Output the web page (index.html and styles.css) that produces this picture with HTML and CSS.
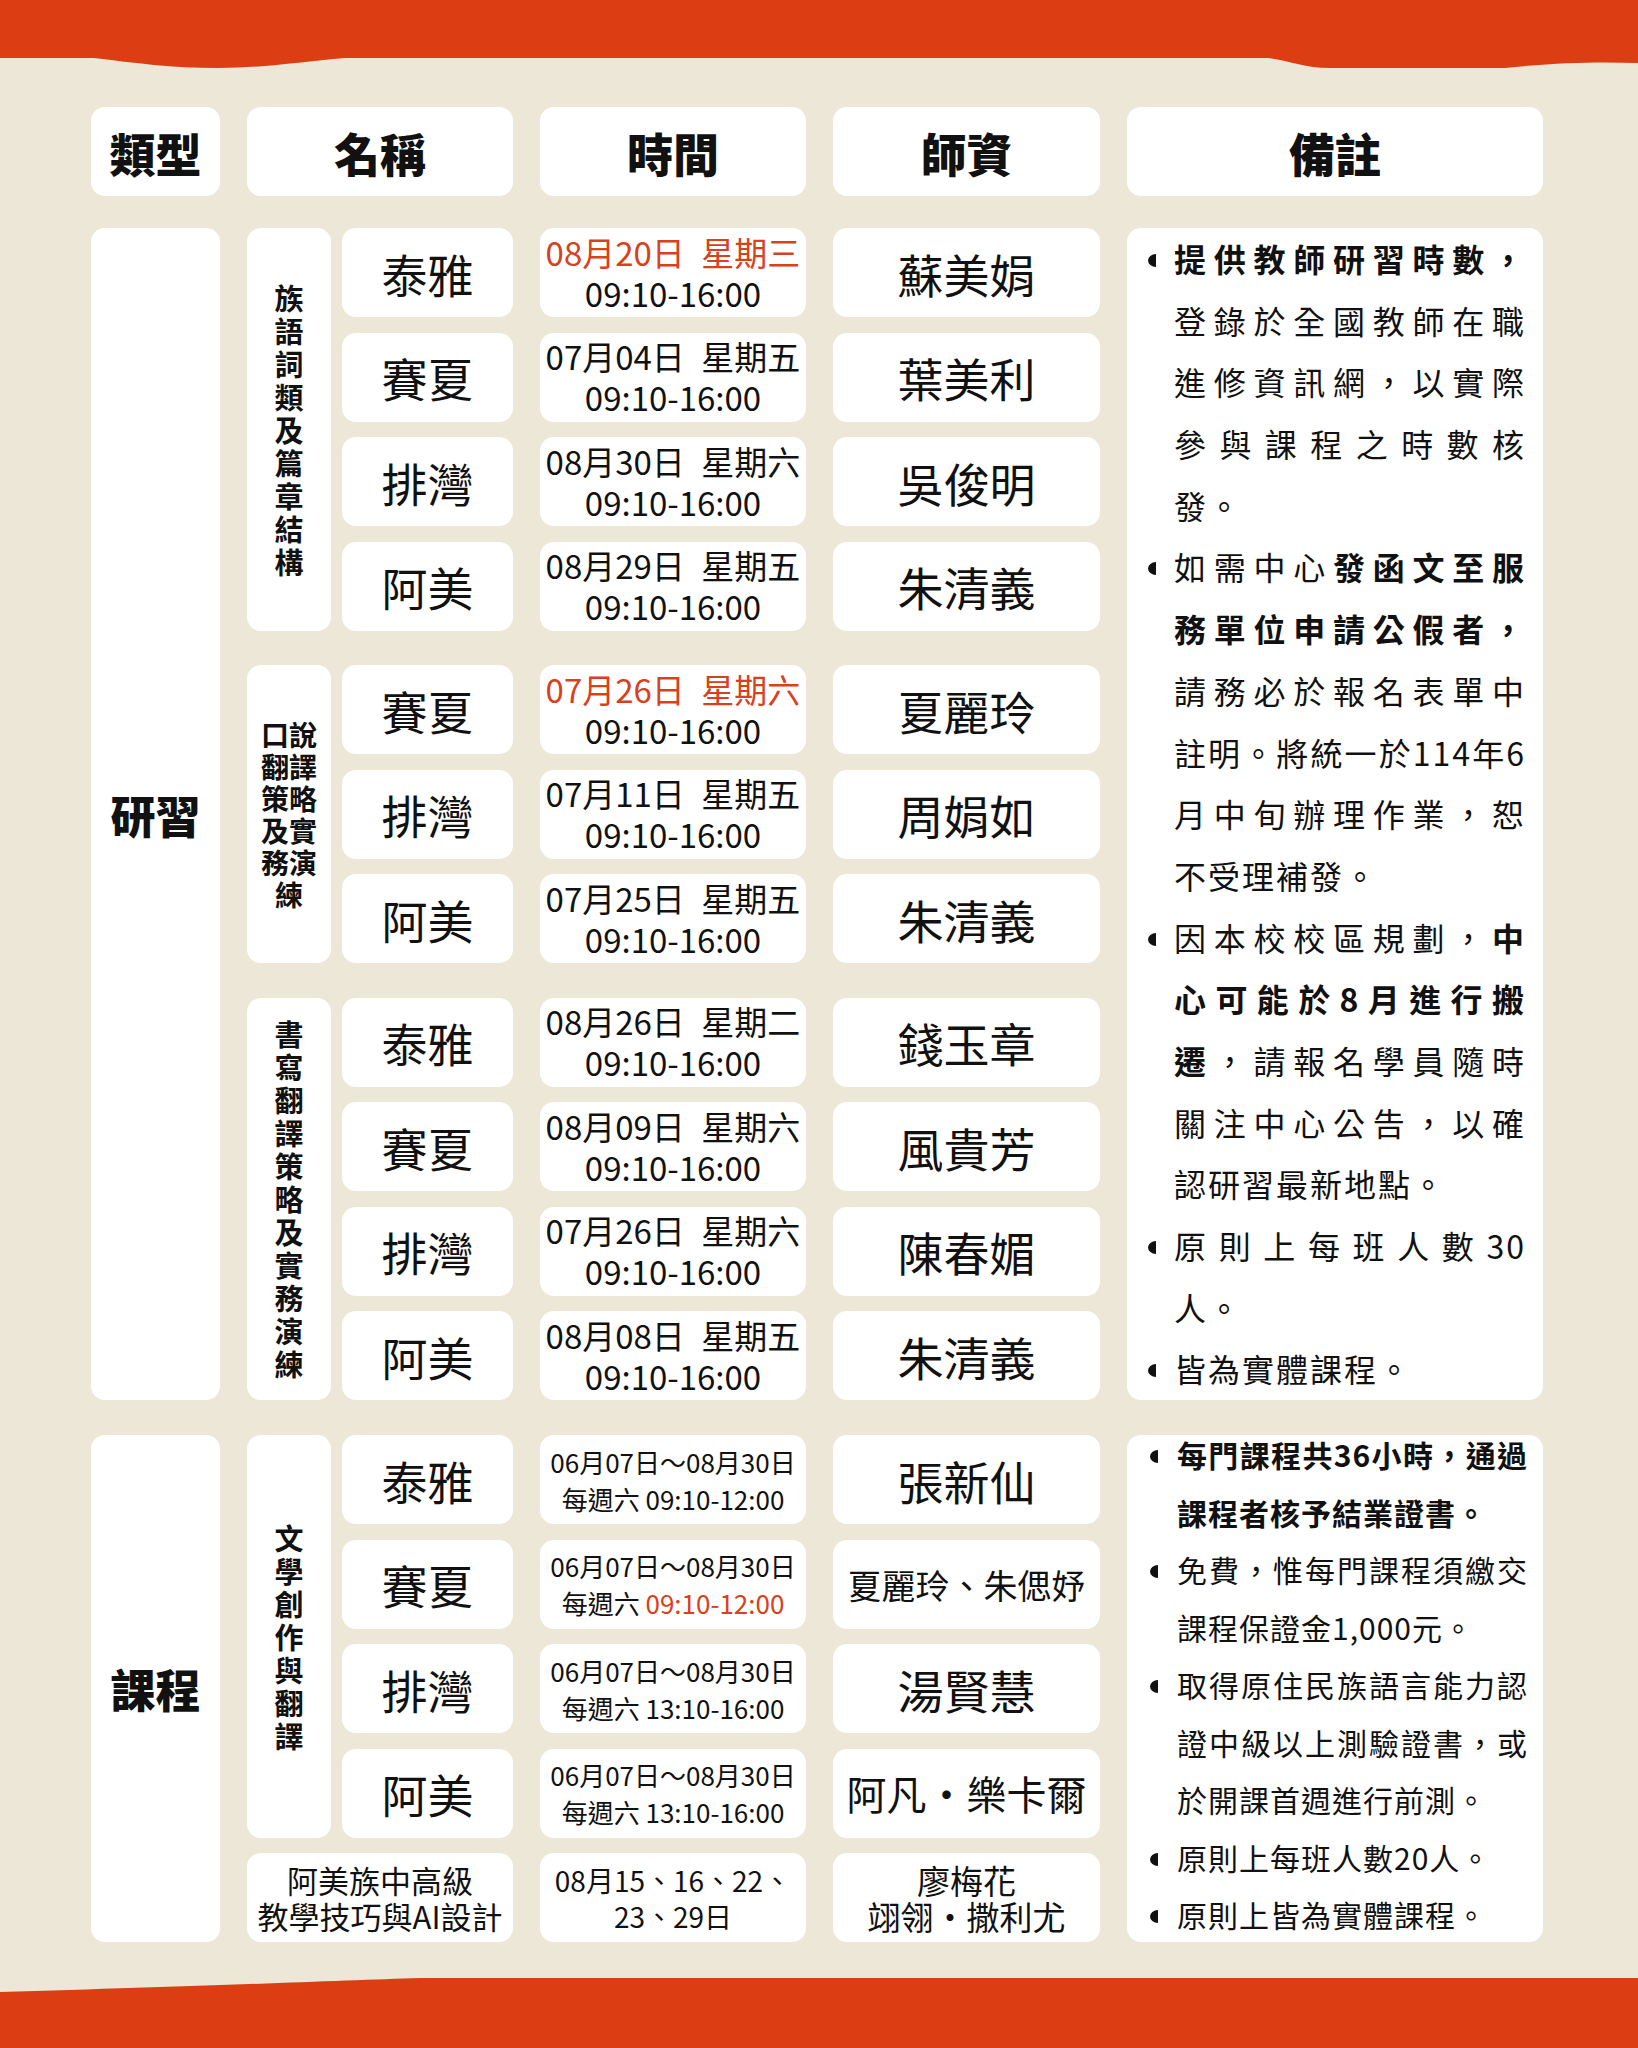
FILE: index.html
```html
<!DOCTYPE html>
<html lang="zh-Hant">
<head>
<meta charset="utf-8">
<title>課程表</title>
<link rel="stylesheet" href="styles.css">
</head>
<body>
<svg class="wave" viewBox="0 0 1638 70" preserveAspectRatio="none" aria-hidden="true">
  <path fill="#DC3D12" d="M0 0 H1638 V63 C1600 62 1560 62 1505 68 H1330 C1305 68 1290 61 1268 58 H345 C300 62 262 68 218 68 C172 68 135 63 94 58 H0 Z"/>
</svg>
<main class="sheet">
  <div class="head-row">
    <div class="cell head w-type">類型</div>
    <div class="cell head w-name">名稱</div>
    <div class="cell head w-time">時間</div>
    <div class="cell head w-teacher">師資</div>
    <div class="cell head w-note">備註</div>
  </div>

  <section class="block">
    <div class="cell type">研習</div>
    <div class="groups">
      <div class="group">
        <div class="cell sub"><span class="vt">族語詞類及篇章結構</span></div>
        <div class="rows">
          <div class="row">
            <div class="cell name">泰雅</div>
            <div class="cell time"><span class="red">08月20日&ensp;星期三</span><span>09:10-16:00</span></div>
            <div class="cell teacher">蘇美娟</div>
          </div>
          <div class="row">
            <div class="cell name">賽夏</div>
            <div class="cell time"><span>07月04日&ensp;星期五</span><span>09:10-16:00</span></div>
            <div class="cell teacher">葉美利</div>
          </div>
          <div class="row">
            <div class="cell name">排灣</div>
            <div class="cell time"><span>08月30日&ensp;星期六</span><span>09:10-16:00</span></div>
            <div class="cell teacher">吳俊明</div>
          </div>
          <div class="row">
            <div class="cell name">阿美</div>
            <div class="cell time"><span>08月29日&ensp;星期五</span><span>09:10-16:00</span></div>
            <div class="cell teacher">朱清義</div>
          </div>
        </div>
      </div>

      <div class="group">
        <div class="cell sub"><span class="vt vt2">口說翻譯策略及實務演練</span></div>
        <div class="rows">
          <div class="row">
            <div class="cell name">賽夏</div>
            <div class="cell time"><span class="red">07月26日&ensp;星期六</span><span>09:10-16:00</span></div>
            <div class="cell teacher">夏麗玲</div>
          </div>
          <div class="row">
            <div class="cell name">排灣</div>
            <div class="cell time"><span>07月11日&ensp;星期五</span><span>09:10-16:00</span></div>
            <div class="cell teacher">周娟如</div>
          </div>
          <div class="row">
            <div class="cell name">阿美</div>
            <div class="cell time"><span>07月25日&ensp;星期五</span><span>09:10-16:00</span></div>
            <div class="cell teacher">朱清義</div>
          </div>
        </div>
      </div>

      <div class="group">
        <div class="cell sub"><span class="vt">書寫翻譯策略及實務演練</span></div>
        <div class="rows">
          <div class="row">
            <div class="cell name">泰雅</div>
            <div class="cell time"><span>08月26日&ensp;星期二</span><span>09:10-16:00</span></div>
            <div class="cell teacher">錢玉章</div>
          </div>
          <div class="row">
            <div class="cell name">賽夏</div>
            <div class="cell time"><span>08月09日&ensp;星期六</span><span>09:10-16:00</span></div>
            <div class="cell teacher">風貴芳</div>
          </div>
          <div class="row">
            <div class="cell name">排灣</div>
            <div class="cell time"><span>07月26日&ensp;星期六</span><span>09:10-16:00</span></div>
            <div class="cell teacher">陳春媚</div>
          </div>
          <div class="row">
            <div class="cell name">阿美</div>
            <div class="cell time"><span>08月08日&ensp;星期五</span><span>09:10-16:00</span></div>
            <div class="cell teacher">朱清義</div>
          </div>
        </div>
      </div>
    </div>
    <div class="cell notes notes-a">
      <ul>
        <li><i class="dot"></i><p class="txt">
          <span class="ln"><b>提供教師研習時數，</b></span>
          <span class="ln">登錄於全國教師在職</span>
          <span class="ln">進修資訊網，以實際</span>
          <span class="ln">參與課程之時數核</span>
          <span class="ln end">發。</span>
        </p></li>
        <li><i class="dot"></i><p class="txt">
          <span class="ln">如需中心<b>發函文至服</b></span>
          <span class="ln"><b>務單位申請公假者，</b></span>
          <span class="ln">請務必於報名表單中</span>
          <span class="ln">註明。將統一於114年6</span>
          <span class="ln">月中旬辦理作業，恕</span>
          <span class="ln end">不受理補發。</span>
        </p></li>
        <li><i class="dot"></i><p class="txt">
          <span class="ln">因本校校區規劃，<b>中</b></span>
          <span class="ln"><b>心可能於8月進行搬</b></span>
          <span class="ln"><b>遷</b>，請報名學員隨時</span>
          <span class="ln">關注中心公告，以確</span>
          <span class="ln end">認研習最新地點。</span>
        </p></li>
        <li><i class="dot"></i><p class="txt">
          <span class="ln">原則上每班人數30</span>
          <span class="ln end">人。</span>
        </p></li>
        <li><i class="dot"></i><p class="txt">
          <span class="ln end">皆為實體課程。</span>
        </p></li>
      </ul>
    </div>
  </section>

  <section class="block">
    <div class="cell type">課程</div>
    <div class="groups course">
      <div class="group">
        <div class="cell sub"><span class="vt">文學創作與翻譯</span></div>
        <div class="rows">
          <div class="row">
            <div class="cell name">泰雅</div>
            <div class="cell time ctime"><span>06月07日～08月30日</span><span>每週六 09:10-12:00</span></div>
            <div class="cell teacher">張新仙</div>
          </div>
          <div class="row">
            <div class="cell name">賽夏</div>
            <div class="cell time ctime"><span>06月07日～08月30日</span><span>每週六 <span class="red">09:10-12:00</span></span></div>
            <div class="cell teacher t-sm">夏麗玲、朱偲妤</div>
          </div>
          <div class="row">
            <div class="cell name">排灣</div>
            <div class="cell time ctime"><span>06月07日～08月30日</span><span>每週六 13:10-16:00</span></div>
            <div class="cell teacher">湯賢慧</div>
          </div>
          <div class="row">
            <div class="cell name">阿美</div>
            <div class="cell time ctime"><span>06月07日～08月30日</span><span>每週六 13:10-16:00</span></div>
            <div class="cell teacher t-md">阿凡・樂卡爾</div>
          </div>
        </div>
      </div>
      <div class="row">
        <div class="cell wide">阿美族中高級<br>教學技巧與AI設計</div>
        <div class="cell time dtime"><span>08月15、16、22、</span><span>23、29日</span></div>
        <div class="cell teacher t-two">廖梅花<br>翊翎・撒利尤</div>
      </div>
    </div>
    <div class="cell notes notes-b">
      <ul>
        <li><i class="dot"></i><p class="txt">
          <span class="ln"><b>每門課程共36小時，通過</b></span>
          <span class="ln end"><b>課程者核予結業證書。</b></span>
        </p></li>
        <li><i class="dot"></i><p class="txt">
          <span class="ln">免費，惟每門課程須繳交</span>
          <span class="ln end">課程保證金1,000元。</span>
        </p></li>
        <li><i class="dot"></i><p class="txt">
          <span class="ln">取得原住民族語言能力認</span>
          <span class="ln">證中級以上測驗證書，或</span>
          <span class="ln end">於開課首週進行前測。</span>
        </p></li>
        <li><i class="dot"></i><p class="txt">
          <span class="ln end">原則上每班人數20人。</span>
        </p></li>
        <li><i class="dot"></i><p class="txt">
          <span class="ln end">原則上皆為實體課程。</span>
        </p></li>
      </ul>
    </div>
  </section>
</main>
<svg class="wave" viewBox="0 0 1638 70" preserveAspectRatio="none" aria-hidden="true">
  <path fill="#DC3D12" d="M0 14 C180 9 330 3 420 0 H1638 V70 H0 Z"/>
</svg>
</body>
</html>
```

FILE: styles.css
```css
html, body {
  margin: 0;
  padding: 0;
}

body {
  width: 1638px;
  background: #ECE7D6;
  color: #111;
  font-family: "Noto Sans CJK TC", "Noto Sans", sans-serif;
}

.wave {
  display: block;
  width: 1638px;
  height: 70px;
}

.sheet {
  padding: 37px 0 36px 91px;
}

.head-row,
.block {
  display: flex;
  gap: 27px;
}

.head-row {
  margin-bottom: 32px;
}

.block + .block {
  margin-top: 35px;
}

.cell {
  background: #fff;
  border-radius: 14px;
  display: flex;
  align-items: center;
  justify-content: center;
  text-align: center;
  box-sizing: border-box;
  flex: none;
}

.head {
  height: 89px;
  font-size: 46px;
  font-weight: 900;
  line-height: 1;
}

.w-type { width: 129px; }
.w-name { width: 266px; }
.w-time { width: 266px; }
.w-teacher { width: 267px; }
.w-note { width: 416px; }

.type {
  width: 129px;
  font-size: 45px;
  font-weight: 900;
}

.groups {
  width: 853px;
  display: flex;
  flex-direction: column;
  gap: 34.5px;
}

.groups.course {
  gap: 15.5px;
}

.group {
  display: flex;
  gap: 11px;
}

.sub {
  width: 84px;
  font-size: 29px;
  font-weight: 700;
  line-height: 33px;
}

.vt {
  display: block;
  width: 30px;
}

.vt2 {
  width: 58px;
  font-size: 28px;
  line-height: 32px;
}

.rows {
  display: flex;
  flex-direction: column;
  gap: 15.5px;
  width: 758px;
}

.row {
  display: flex;
  gap: 27px;
  height: 89px;
}

.name {
  width: 171px;
  font-size: 46px;
}

.time {
  width: 266px;
  flex-direction: column;
  font-size: 33px;
  line-height: 41px;
}

.ctime {
  font-size: 26px;
  line-height: 37px;
}

.dtime {
  font-size: 28px;
  line-height: 36px;
}

.red {
  color: #D9401C;
}

.teacher {
  width: 267px;
  font-size: 46px;
}

.t-sm { font-size: 34px; }
.t-md { font-size: 40px; }
.t-two {
  font-size: 33px;
  line-height: 36px;
}

.wide {
  width: 266px;
  font-size: 31px;
  line-height: 36px;
}

.notes {
  width: 416px;
  justify-content: flex-start;
  text-align: left;
}

.notes ul {
  list-style: none;
  margin: 0;
  padding: 0;
  width: 100%;
}

.notes li {
  display: flex;
}

.dot {
  flex: none;
  width: 8px;
  height: 13px;
  background: #111;
  border-radius: 8px 0 0 8px / 6.5px 0 0 6.5px;
}

.txt {
  margin: 0;
}

.ln {
  display: block;
  text-align: justify;
  text-align-last: justify;
}

.ln.end {
  text-align-last: left;
}

.notes b {
  font-weight: 700;
}

.notes-a {
  font-size: 32px;
  letter-spacing: 2px;
  line-height: 61.68px;
}

.notes-a .dot {
  margin: 26px 18px 0 21px;
}

.notes-a .txt {
  width: 352px;
}

.notes-b {
  font-size: 30px;
  letter-spacing: 1px;
  line-height: 57.5px;
}

.notes-b ul {
  margin: -9px 0 -1.5px;
}

.notes-b .dot {
  margin: 24px 19px 0 23px;
}

.notes-b .txt {
  width: 351px;
}
```
